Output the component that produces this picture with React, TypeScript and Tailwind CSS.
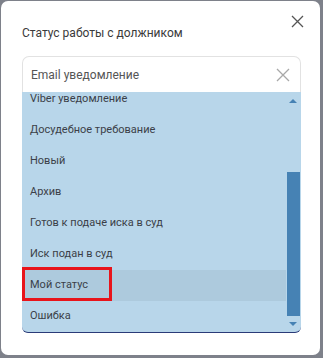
const items = [
  "Viber уведомление",
  "Досудебное требование",
  "Новый",
  "Архив",
  "Готов к подаче иска в суд",
  "Иск подан в суд",
  "Мой статус",
  "Ошибка",
];

export default function App() {
  return (
    <div className="w-[323px] h-[358px] bg-[#7e818a] pt-[1px] pl-[1px] font-['Roboto',sans-serif]">
      <div className="relative w-[319px] h-[354px] bg-white rounded-[7px] px-5 pt-[23px]">
        {/* close */}
        <button className="absolute top-[14px] right-[16px] text-[#555]">
          <svg width="13" height="13" viewBox="0 0 13 13" fill="none" stroke="currentColor" strokeWidth="1.3">
            <path d="M1 1 L12 12 M12 1 L1 12" />
          </svg>
        </button>

        <h2 className="ml-[1px] text-[12px] leading-[18px] text-[#3a3a3a]">Статус работы с должником</h2>

        <div className="mt-[14px] ml-[1px] w-[279px]">
          {/* input */}
          <div className="h-[36px] flex items-center justify-between border border-b-0 border-[#e2e2e2] rounded-t-[7px] pl-2 pr-[10px]">
            <span className="text-[12px] text-[#555]">Email уведомление</span>
            <svg width="14" height="14" viewBox="0 0 14 14" fill="none" stroke="#a8a8a8" strokeWidth="1.3">
              <path d="M1 1 L13 13 M13 1 L1 13" />
            </svg>
          </div>

          {/* list */}
          <div className="relative h-[241px] bg-[#b8d6ea] border-b border-[#2b3b78] rounded-b-[6px] overflow-hidden flex">
            <div className="flex-1 -mt-[8px]">
              {items.map((t) => (
                <div
                  key={t}
                  className={`h-[31px] flex items-center pl-2 text-[11px] text-[#3b3f48] ${t === "Мой статус" ? "bg-[#adcadd]" : ""}`}
                >
                  {t}
                </div>
              ))}
            </div>
            {/* scrollbar */}
            <div className="w-[15px] flex flex-col items-center pr-[1px]">
              <div className="h-[17px] flex items-center justify-center">
                <div className="w-0 h-0 border-l-[4px] border-r-[4px] border-b-[4px] border-l-transparent border-r-transparent border-b-[#4682b4]" />
              </div>
              <div className="mt-[63px] w-[13px] h-[144px] bg-[#4682b4]" />
              <div className="flex-1 flex items-center justify-center">
                <div className="w-0 h-0 border-l-[4px] border-r-[4px] border-t-[4px] border-l-transparent border-r-transparent border-t-[#4682b4]" />
              </div>
            </div>
          </div>
        </div>

        {/* annotation */}
        <div className="absolute left-[21px] top-[266px] w-[90px] h-[34px] border-[3px] border-[#e8141b]" />
      </div>
    </div>
  );
}
